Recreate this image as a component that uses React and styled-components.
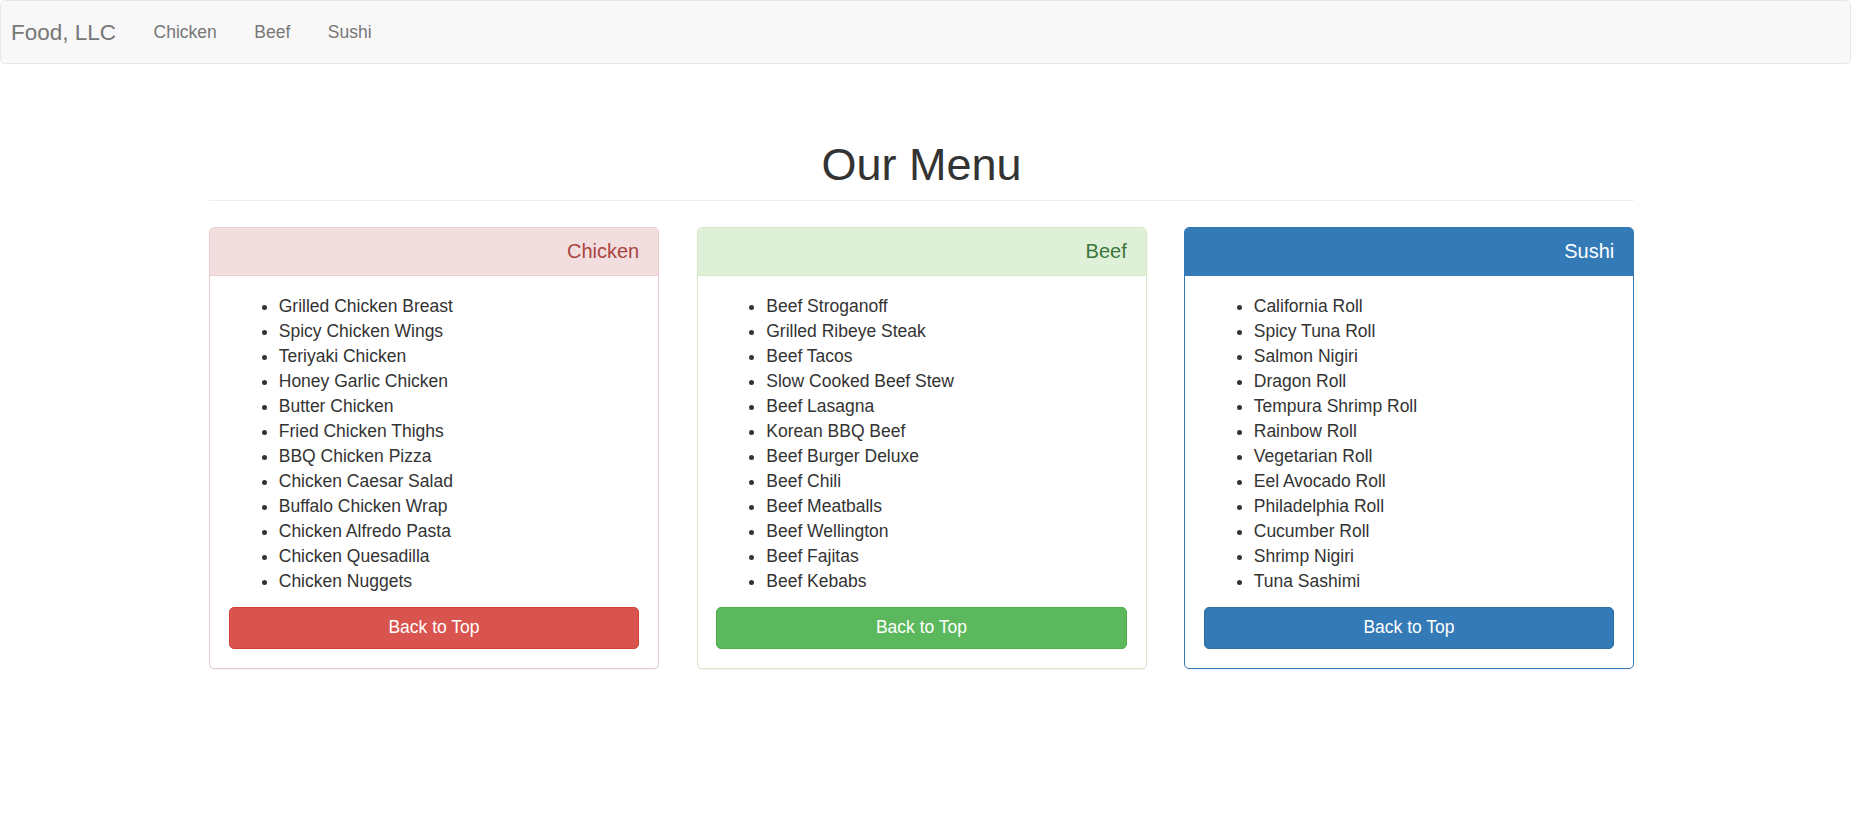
import React from "react";
import styled, { createGlobalStyle } from "styled-components";

const MENU = [
  {
    id: "chicken",
    title: "Chicken",
    variant: "danger",
    items: [
      "Grilled Chicken Breast",
      "Spicy Chicken Wings",
      "Teriyaki Chicken",
      "Honey Garlic Chicken",
      "Butter Chicken",
      "Fried Chicken Thighs",
      "BBQ Chicken Pizza",
      "Chicken Caesar Salad",
      "Buffalo Chicken Wrap",
      "Chicken Alfredo Pasta",
      "Chicken Quesadilla",
      "Chicken Nuggets",
    ],
  },
  {
    id: "beef",
    title: "Beef",
    variant: "success",
    items: [
      "Beef Stroganoff",
      "Grilled Ribeye Steak",
      "Beef Tacos",
      "Slow Cooked Beef Stew",
      "Beef Lasagna",
      "Korean BBQ Beef",
      "Beef Burger Deluxe",
      "Beef Chili",
      "Beef Meatballs",
      "Beef Wellington",
      "Beef Fajitas",
      "Beef Kebabs",
    ],
  },
  {
    id: "sushi",
    title: "Sushi",
    variant: "primary",
    items: [
      "California Roll",
      "Spicy Tuna Roll",
      "Salmon Nigiri",
      "Dragon Roll",
      "Tempura Shrimp Roll",
      "Rainbow Roll",
      "Vegetarian Roll",
      "Eel Avocado Roll",
      "Philadelphia Roll",
      "Cucumber Roll",
      "Shrimp Nigiri",
      "Tuna Sashimi",
    ],
  },
];

// bootstrap 3 contextual colours
const VARIANTS = {
  danger: {
    border: "#ebccd1",
    headBg: "#f2dede",
    headColor: "#a94442",
    btnBg: "#d9534f",
    btnBorder: "#d43f3a",
  },
  success: {
    border: "#d6e9c6",
    headBg: "#dff0d8",
    headColor: "#3c763d",
    btnBg: "#5cb85c",
    btnBorder: "#4cae4c",
  },
  primary: {
    border: "#337ab7",
    headBg: "#337ab7",
    headColor: "#ffffff",
    btnBg: "#337ab7",
    btnBorder: "#2e6da4",
  },
};

const App = () => {
  return (
    <>
      <GlobalStyle />
      <Navbar>
        <Brand href="#">Food, LLC</Brand>
        <NavList>
          {MENU.map((m) => (
            <NavItem key={m.id}>
              <NavLink href={`#${m.id}`}>{m.title}</NavLink>
            </NavItem>
          ))}
        </NavList>
      </Navbar>

      <Page>
        <Container>
          <PageHeader>Our Menu</PageHeader>
          <Row>
            {MENU.map((m) => (
              <MenuPanel key={m.id} {...m} />
            ))}
          </Row>
        </Container>
      </Page>
    </>
  );
};

const MenuPanel = ({ id, title, variant, items }) => (
  <Panel id={id} $v={variant}>
    <PanelHeading $v={variant}>
      <PanelTitle>{title}</PanelTitle>
    </PanelHeading>
    <PanelBody>
      <ItemList>
        {items.map((it) => (
          <li key={it}>{it}</li>
        ))}
      </ItemList>
      <TopButton $v={variant} href="#">
        Back to Top
      </TopButton>
    </PanelBody>
  </Panel>
);

export default App;

// --- styles ---

const GlobalStyle = createGlobalStyle`
  * { box-sizing: border-box; }
  html, body {
    margin: 0;
    padding: 0;
    background: #fff;
  }
  body {
    font-family: "Liberation Sans", Arial, Helvetica, sans-serif;
    font-size: 17.5px;
    line-height: 25px;
    color: #333;
  }
`;

const Navbar = styled.nav`
  display: flex;
  align-items: flex-start;
  height: 64px;
  background-color: #f8f8f8;
  border: 1px solid #e7e7e7;
  border-radius: 5px;
`;

const Brand = styled.a`
  display: block;
  padding: 18.75px 18.75px 18.75px 10px;
  font-size: 22.5px;
  line-height: 25px;
  color: #777;
  text-decoration: none;
`;

const NavList = styled.ul`
  display: flex;
  margin: 0;
  padding: 0;
  list-style: none;
`;

const NavItem = styled.li``;

const NavLink = styled.a`
  display: block;
  padding: 18.75px;
  font-size: 17.5px;
  line-height: 25px;
  color: #777;
  text-decoration: none;
`;

const Page = styled.main`
  padding-right: 8px;
`;

const Container = styled.div`
  width: 1425px;
  margin: 0 auto;
`;

const PageHeader = styled.h1`
  margin: 76px 0 26px;
  padding-bottom: 10px;
  border-bottom: 1px solid #eee;
  font-size: 45px;
  font-weight: 500;
  line-height: 49.5px;
  text-align: center;
  color: #333;
`;

const Row = styled.div`
  display: grid;
  grid-template-columns: repeat(3, 1fr);
  column-gap: 37.5px;
  align-items: start;
`;

const Panel = styled.section`
  background: #fff;
  border: 1px solid ${(p) => VARIANTS[p.$v].border};
  border-radius: 5px;
  box-shadow: 0 1px 1px rgba(0, 0, 0, 0.05);
  margin-bottom: 25px;
`;

const PanelHeading = styled.div`
  padding: 12.5px 18.75px;
  background-color: ${(p) => VARIANTS[p.$v].headBg};
  color: ${(p) => VARIANTS[p.$v].headColor};
  border-bottom: 1px solid ${(p) => VARIANTS[p.$v].border};
  border-radius: 4px 4px 0 0;
  text-align: right;
`;

const PanelTitle = styled.h3`
  margin: 0;
  font-size: 20px;
  font-weight: 500;
  line-height: 22px;
  color: inherit;
`;

const PanelBody = styled.div`
  padding: 18.75px;
`;

const ItemList = styled.ul`
  margin: 0 0 12.5px;
  padding-left: 50px;
  list-style: disc;
`;

const TopButton = styled.a`
  display: block;
  width: 100%;
  padding: 7.5px 15px;
  font-size: 17.5px;
  line-height: 25px;
  text-align: center;
  text-decoration: none;
  color: #fff;
  background-color: ${(p) => VARIANTS[p.$v].btnBg};
  border: 1px solid ${(p) => VARIANTS[p.$v].btnBorder};
  border-radius: 5px;
`;
